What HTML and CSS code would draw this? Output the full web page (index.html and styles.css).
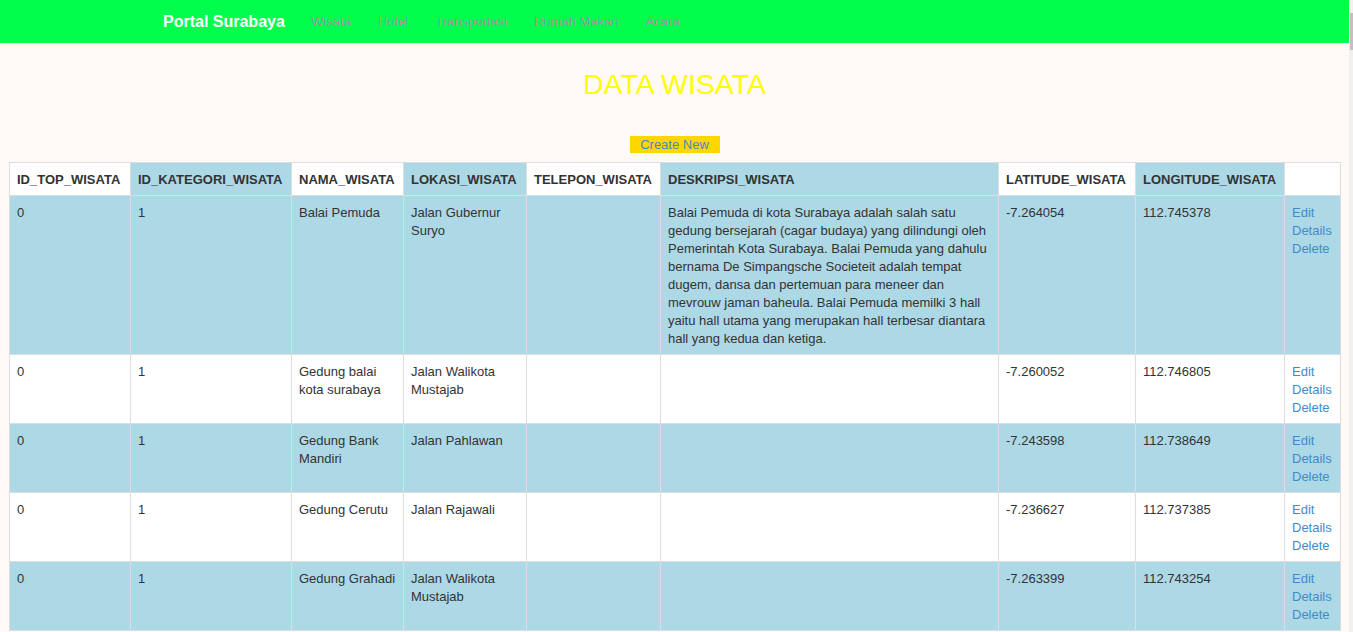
FILE: index.html
```html
<!DOCTYPE html>
<html>
<head>
<meta charset="utf-8">
<title>Data Wisata</title>
<link rel="stylesheet" href="styles.css">
</head>
<body>
<div class="page">
  <header class="navbar">
    <a class="brand" href="#">Portal Surabaya</a>
    <nav class="nav">
      <a href="#">Wisata</a>
      <a href="#">Hotel</a>
      <a href="#">Transportasi</a>
      <a href="#">Rumah Makan</a>
      <a href="#">Acara</a>
    </nav>
  </header>
  <main class="content">
    <h2 class="title">DATA WISATA</h2>
    <div class="actions"><a class="create" href="#">Create New</a></div>
    <table class="data">
      <colgroup>
        <col class="c1"><col class="c2"><col class="c3"><col class="c4"><col class="c5"><col class="c6"><col class="c7"><col class="c8"><col class="c9">
      </colgroup>
      <thead>
        <tr>
          <th>ID_TOP_WISATA</th>
          <th class="alt">ID_KATEGORI_WISATA</th>
          <th>NAMA_WISATA</th>
          <th class="alt">LOKASI_WISATA</th>
          <th>TELEPON_WISATA</th>
          <th class="alt">DESKRIPSI_WISATA</th>
          <th>LATITUDE_WISATA</th>
          <th class="alt">LONGITUDE_WISATA</th>
          <th></th>
        </tr>
      </thead>
      <tbody>
        <tr class="blue">
          <td>0</td><td>1</td><td>Balai Pemuda</td><td>Jalan Gubernur Suryo</td><td></td>
          <td>Balai Pemuda di kota Surabaya adalah salah satu gedung bersejarah (cagar budaya) yang dilindungi oleh Pemerintah Kota Surabaya. Balai Pemuda yang dahulu bernama De Simpangsche Societeit adalah tempat dugem, dansa dan pertemuan para meneer dan mevrouw jaman baheula. Balai Pemuda memilki 3 hall yaitu hall utama yang merupakan hall terbesar diantara hall yang kedua dan ketiga.</td>
          <td>-7.264054</td><td>112.745378</td>
          <td class="links"><a href="#">Edit</a><a href="#">Details</a><a href="#">Delete</a></td>
        </tr>
        <tr>
          <td>0</td><td>1</td><td>Gedung balai kota surabaya</td><td>Jalan Walikota Mustajab</td><td></td><td></td>
          <td>-7.260052</td><td>112.746805</td>
          <td class="links"><a href="#">Edit</a><a href="#">Details</a><a href="#">Delete</a></td>
        </tr>
        <tr class="blue">
          <td>0</td><td>1</td><td>Gedung Bank Mandiri</td><td>Jalan Pahlawan</td><td></td><td></td>
          <td>-7.243598</td><td>112.738649</td>
          <td class="links"><a href="#">Edit</a><a href="#">Details</a><a href="#">Delete</a></td>
        </tr>
        <tr>
          <td>0</td><td>1</td><td>Gedung Cerutu</td><td>Jalan Rajawali</td><td></td><td></td>
          <td>-7.236627</td><td>112.737385</td>
          <td class="links"><a href="#">Edit</a><a href="#">Details</a><a href="#">Delete</a></td>
        </tr>
        <tr class="blue">
          <td>0</td><td>1</td><td>Gedung Grahadi</td><td>Jalan Walikota Mustajab</td><td></td><td></td>
          <td>-7.263399</td><td>112.743254</td>
          <td class="links"><a href="#">Edit</a><a href="#">Details</a><a href="#">Delete</a></td>
        </tr>
      </tbody>
    </table>
  </main>
</div>
<div class="scrollbar"><div class="thumb"></div></div>
</body>
</html>
```

FILE: styles.css
```css
html, body {
  margin: 0;
  padding: 0;
}
body {
  display: flex;
  font-family: "Liberation Sans", Arial, sans-serif;
  font-size: 13px;
  line-height: 18px;
  color: #333333;
  background: #fff9f8;
  height: 632px;
  overflow: hidden;
}
.page {
  flex: 1;
  min-width: 0;
}
.scrollbar {
  width: 4px;
  background: #f0f0f0;
  flex: none;
}
.thumb {
  margin-top: 13px;
  height: 37px;
  margin-left: 1px;
  background: #c1c1c1;
}
a {
  text-decoration: none;
}
.navbar {
  height: 43px;
  background: #00ff4c;
  display: flex;
  align-items: center;
  padding-left: 163px;
}
.brand {
  color: #ffffff;
  font-weight: bold;
  font-size: 16px;
  line-height: 20px;
  margin-right: 13px;
}
.nav {
  display: flex;
}
.nav a {
  color: #999999;
  font-size: 13px;
  padding: 0 13.5px;
  line-height: 20px;
}
.content {
  padding: 0 9px;
}
.title {
  margin: 0;
  padding-top: 26px;
  height: 36px;
  line-height: 30px;
  text-align: center;
  font-weight: normal;
  font-size: 28.5px;
  color: #ffff00;
}
.actions {
  display: flex;
  justify-content: center;
  padding-top: 31px;
  padding-bottom: 9px;
}
.create {
  display: block;
  width: 90px;
  height: 17px;
  line-height: 17px;
  background: #ffd700;
  color: #428bca;
  text-align: center;
}
.data {
  table-layout: fixed;
  width: 1331px;
  border-collapse: collapse;
}
.c1 { width: 121px; }
.c2 { width: 161px; }
.c3 { width: 112px; }
.c4 { width: 123px; }
.c5 { width: 134px; }
.c6 { width: 338px; }
.c7 { width: 137px; }
.c8 { width: 149px; }
.c9 { width: 56px; }
.data th, .data td {
  border: 1px solid #dddddd;
  padding: 8px 7px 6px;
  text-align: left;
  vertical-align: top;
  line-height: 18px;
}
.data th {
  font-weight: bold;
  background: #ffffff;
  vertical-align: bottom;
}
.data th.alt {
  background: #add8e6;
}
.data tbody tr {
  background: #ffffff;
}
.data tbody tr.blue {
  background: #add8e6;
}
.links a {
  display: block;
  color: #428bca;
}
```
